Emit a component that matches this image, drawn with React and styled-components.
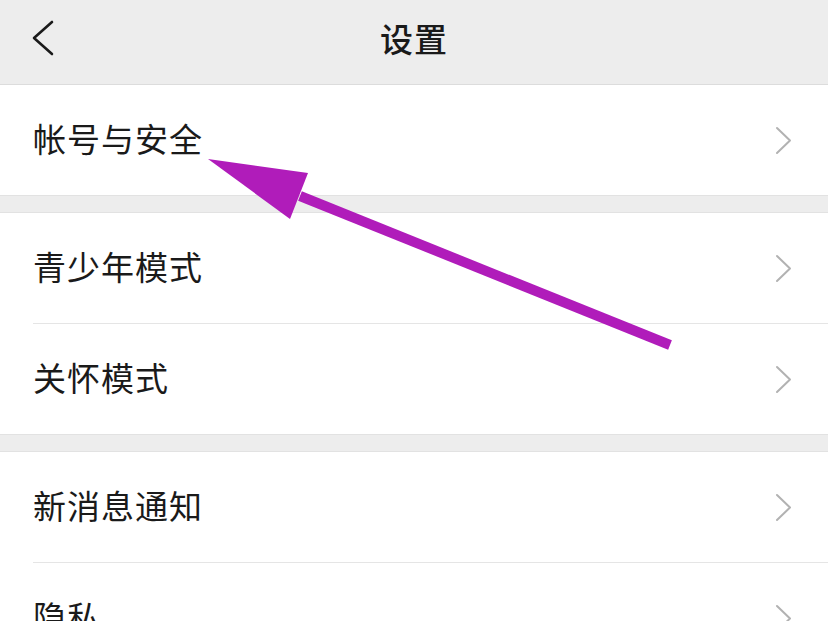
import styled, { createGlobalStyle } from 'styled-components';

const GlobalStyle = createGlobalStyle`
  html, body {
    margin: 0;
    padding: 0;
    background: #ededed;
    overflow: hidden;
  }
  body {
    font-family: "Noto Sans CJK SC", "Noto Sans", sans-serif;
  }
`;

const groups = [
  ['帐号与安全'],
  ['青少年模式', '关怀模式'],
  ['新消息通知', '隐私'],
];

function Chevron({ left, color = '#b2b2b2', width = 2, w = 16, h = 28 }) {
  const d = left
    ? `M${w - 2} 2 L2 ${h / 2} L${w - 2} ${h - 2}`
    : `M2 2 L${w - 2} ${h / 2} L2 ${h - 2}`;
  return (
    <svg width={w} height={h} viewBox={`0 0 ${w} ${h}`} fill="none">
      <path d={d} stroke={color} strokeWidth={width} strokeLinecap="round" strokeLinejoin="round" />
    </svg>
  );
}

function App() {
  return (
    <Page>
      <GlobalStyle />
      <Header>
        <Back>
          <Chevron left color="#1a1a1a" width={2.6} w={22} h={36} />
        </Back>
        <Title>设置</Title>
      </Header>
      {groups.map((group, gi) => (
        <Group key={gi} $first={gi === 0}>
          {group.map((label, i) => (
            <Row key={label} $last={i === group.length - 1}>
              <Label>{label}</Label>
              <Chevron w={17} h={29} />
            </Row>
          ))}
        </Group>
      ))}
      <Overlay width="828" height="621" viewBox="0 0 828 621">
        <line x1="300" y1="196" x2="670" y2="345" stroke="#b01cba" strokeWidth="10" />
        <polygon points="208,159 308,173 290,219" fill="#b01cba" />
      </Overlay>
    </Page>
  );
}

export default App;

const Page = styled.div`
  position: relative;
  width: 828px;
  height: 621px;
  overflow: hidden;
  background: #ededed;
`;

const Header = styled.div`
  position: relative;
  height: 85px;
  box-sizing: border-box;
  padding-bottom: 8px;
  display: flex;
  align-items: center;
  justify-content: center;
  background: #ededed;
  border-bottom: 1px solid #dcdcdc;
`;

const Back = styled.div`
  position: absolute;
  left: 32px;
  top: 20px;
  display: flex;
`;

const Title = styled.span`
  font-size: 33px;
  font-weight: 500;
  color: #1a1a1a;
  letter-spacing: 1px;
`;

const Group = styled.div`
  background: #fff;
  margin-top: ${(p) => (p.$first ? '0' : '16px')};
  border-top: ${(p) => (p.$first ? 'none' : '1px solid #e2e2e2')};
  border-bottom: 1px solid #e2e2e2;
  padding-left: 33px;
`;

const Row = styled.div`
  height: 110px;
  display: flex;
  align-items: center;
  justify-content: space-between;
  padding-right: 36px;
  border-bottom: ${(p) => (p.$last ? 'none' : '1px solid #e5e5e5')};
`;

const Label = styled.span`
  font-size: 33px;
  color: #1a1a1a;
  letter-spacing: 1px;
  margin-bottom: 4px;
`;

const Overlay = styled.svg`
  position: absolute;
  left: 0;
  top: 0;
  pointer-events: none;
`;
